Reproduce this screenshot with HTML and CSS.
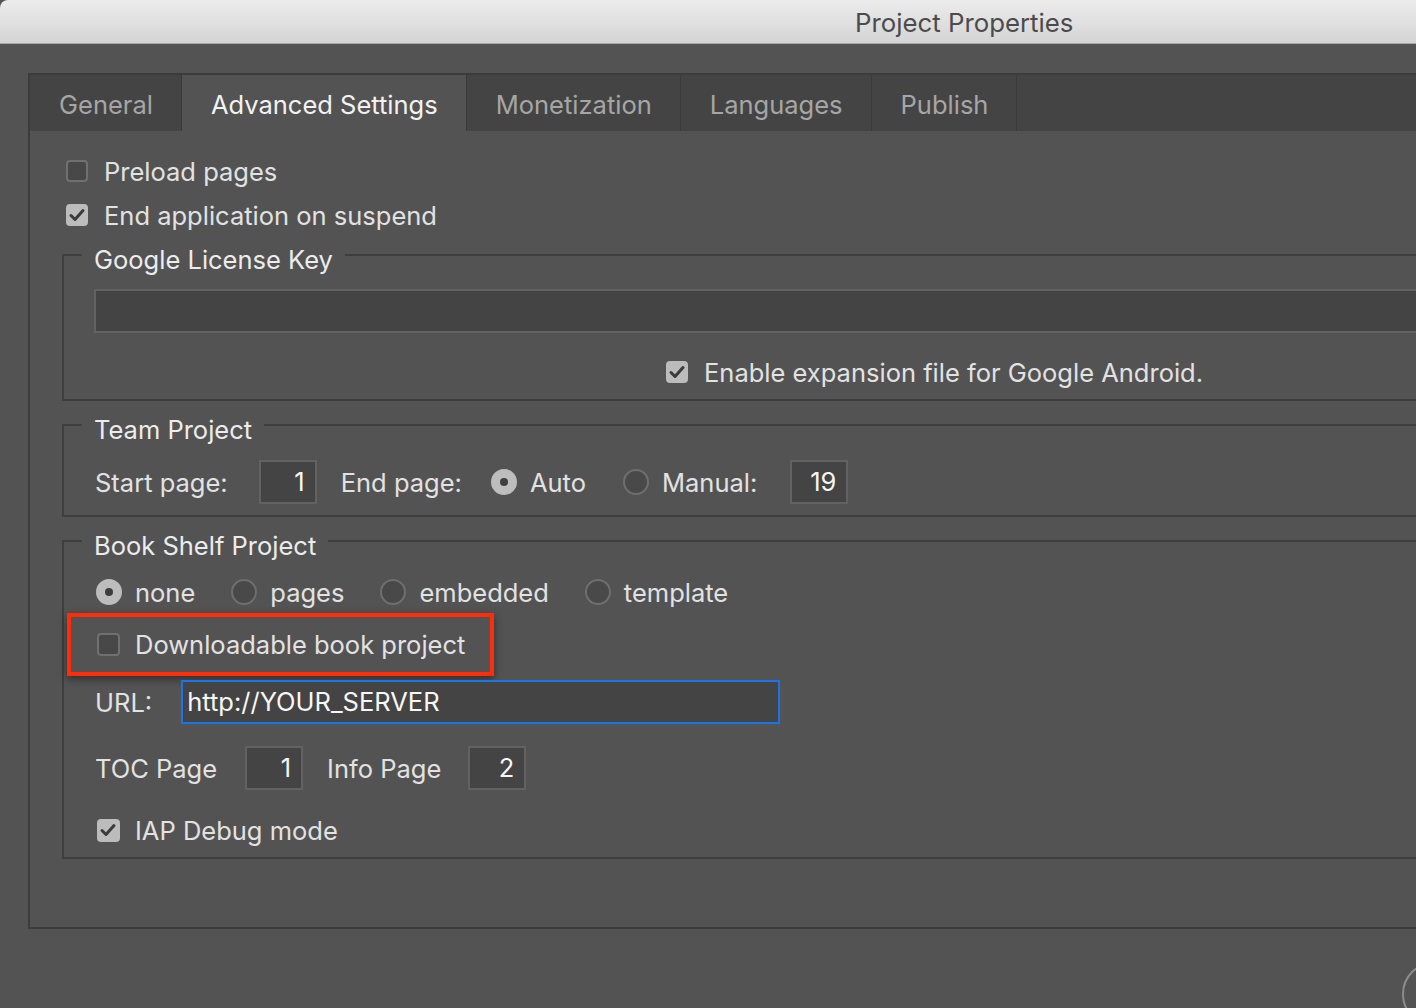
FILE: index.html
```html
<!DOCTYPE html>
<html>
<head>
<meta charset="utf-8">
<title>Project Properties</title>
<link rel="stylesheet" href="styles.css">
</head>
<body>
<div class="window">
  <header class="titlebar">Project Properties</header>
  <main class="main">
    <section class="panel">
      <nav class="tabs">
        <div class="tab">General</div>
        <div class="tab active">Advanced Settings</div>
        <div class="tab">Monetization</div>
        <div class="tab">Languages</div>
        <div class="tab">Publish</div>
      </nav>
      <div class="content">
        <label class="check-row"><span class="checkbox"></span>Preload pages</label>
        <label class="check-row"><span class="checkbox checked"><svg viewBox="0 0 22 22"><path d="M5 11.5l4 4 8-9"/></svg></span>End application on suspend</label>

        <div class="group group-license">
          <div class="legend">Google License Key</div>
          <div class="wide-input"></div>
          <label class="check-row expansion"><span class="checkbox checked"><svg viewBox="0 0 22 22"><path d="M5 11.5l4 4 8-9"/></svg></span>Enable expansion file for Google Android.</label>
        </div>

        <div class="group group-team">
          <div class="legend">Team Project</div>
          <div class="field-row team-row">
            <span class="lbl">Start page:</span>
            <span class="num-input start-input">1</span>
            <span class="lbl endpage">End page:</span>
            <span class="radio-opt auto"><span class="radio on"></span>Auto</span>
            <span class="radio-opt manual"><span class="radio"></span>Manual:</span>
            <span class="num-input manual-input">19</span>
          </div>
        </div>

        <div class="group group-book">
          <div class="legend">Book Shelf Project</div>
          <div class="field-row radios">
            <span class="radio-opt"><span class="radio on"></span>none</span>
            <span class="radio-opt"><span class="radio"></span>pages</span>
            <span class="radio-opt"><span class="radio"></span>embedded</span>
            <span class="radio-opt"><span class="radio"></span>template</span>
          </div>
          <div class="highlight">
            <label class="check-row inner"><span class="checkbox"></span>Downloadable book project</label>
          </div>
          <div class="field-row url-row">
            <span class="lbl">URL:</span>
            <span class="url-input">http://YOUR_SERVER</span>
          </div>
          <div class="field-row toc-row">
            <span class="lbl">TOC Page</span>
            <span class="num-input toc-input">1</span>
            <span class="lbl info">Info Page</span>
            <span class="num-input info-input">2</span>
          </div>
          <label class="check-row inner iap"><span class="checkbox checked"><svg viewBox="0 0 22 22"><path d="M5 11.5l4 4 8-9"/></svg></span>IAP Debug mode</label>
        </div>
      </div>
    </section>
  </main>
  <div class="help-button"></div>
</div>
</body>
</html>
```
FILE: styles.css
```css
* { box-sizing: border-box; }
html, body {
  margin: 0;
  height: 100%;
  overflow: hidden;
  background: #535353;
}
body {
  font-family: "Inter", "Noto Sans", sans-serif;
  font-size: 25.5px;
  color: #e2e2e2;
}
.window {
  position: relative;
  height: 1008px;
  overflow: hidden;
}
.titlebar {
  height: 44px;
  background: linear-gradient(#ececec, #d4d4d4);
  border-bottom: 1px solid #a8a8a8;
  border-top-left-radius: 8px;
  color: #4b4b4b;
  font-size: 25.8px;
  line-height: 46px;
  padding-left: 855px;
}
.main {
  padding: 29px 0 0 28px;
}
.panel {
  margin-right: -60px;
  border: 2px solid #3c3c3c;
  border-right: none;
}
.tabs {
  display: flex;
  height: 56px;
  background: #444444;
}
.tab {
  height: 56px;
  line-height: 60px;
  padding: 0 28px 0 29px;
  border-right: 1px solid #3a3a3a;
  color: #a6a6a6;
  font-size: 25.5px;
}
.tab.active {
  background: #535353;
  color: #f2f2f2;
}
.content {
  padding: 18px 0 68px 36px;
}
.check-row {
  display: flex;
  align-items: center;
  height: 44px;
  gap: 16px;
}
.checkbox {
  width: 22px;
  height: 22px;
  border: 2px solid #707070;
  border-radius: 4px;
  background: #484848;
  flex: none;
  display: flex;
}
.checkbox.checked {
  background: #bcbcbc;
  border-color: #bcbcbc;
}
.checkbox svg {
  margin: -2px;
  width: 22px;
  height: 22px;
}
.checkbox svg path {
  fill: none;
  stroke: #3b3b3b;
  stroke-width: 3;
  stroke-linecap: round;
  stroke-linejoin: round;
}
.group {
  margin-left: -4px;
  border: 2px solid #3e3e3e;
  border-right: none;
  padding-left: 31px;
}
.legend {
  display: block;
  width: max-content;
  margin: -16px 0 0 -13px;
  height: 30px;
  line-height: 39px;
  padding: 0 12px;
  background: #535353;
  color: #ececec;
}
.group-license {
  margin-top: 17px;
  padding-bottom: 5px;
}
.wide-input {
  margin: 19px 0 0 -1px;
  height: 44px;
  background: #444444;
  border: 2px solid #626262;
}
.expansion {
  margin: 17px 0 0 571px;
}
.group-team {
  margin-top: 23px;
  padding-bottom: 11px;
}
.field-row {
  display: flex;
  align-items: center;
  height: 44px;
}
.team-row { margin-top: 20px; }
.num-input {
  width: 58px;
  height: 44px;
  background: #444444;
  border: 2px solid #626262;
  text-align: right;
  padding-right: 10px;
  line-height: 40px;
  color: #f5f5f5;
}
.start-input { margin-left: 31px; }
.endpage { margin-left: 24px; }
.auto { margin-left: 29px; }
.manual { margin-left: 37px; }
.manual-input { margin-left: 33px; }
.radio-opt {
  display: flex;
  align-items: center;
  gap: 13px;
}
.radio {
  width: 26px;
  height: 26px;
  border-radius: 50%;
  border: 2px solid #6f6f6f;
  background: #494949;
  flex: none;
  position: relative;
}
.radio.on {
  background: #bdbdbd;
  border-color: #bdbdbd;
}
.radio.on::after {
  content: "";
  position: absolute;
  left: 7px;
  top: 7px;
  width: 8px;
  height: 8px;
  border-radius: 50%;
  background: #3e3e3e;
}
.group-book {
  margin-top: 23px;
  padding-bottom: 5px;
}
.radios {
  margin: 14px 0 0 1px;
  gap: 36px;
}
.highlight {
  display: block;
  width: max-content;
  margin: -1px 0 0 -28px;
  border: 4px solid #ff2d0a;
  padding: 0 25px 0 26px;
  box-shadow: 0 3px 8px rgba(0,0,0,0.45);
}
.check-row.inner {
  height: 55px;
  gap: 15px;
}
.check-row.inner .checkbox {
  width: 23px;
  height: 23px;
}
.url-row { margin-top: 4px; }
.url-input {
  margin-left: 29px;
  width: 599px;
  height: 44px;
  border: 2px solid #1b73e8;
  background: #444444;
  line-height: 40px;
  padding-left: 4px;
  color: #f7f7f7;
}
.toc-row { margin-top: 22px; }
.toc-input { margin-left: 28px; }
.info { margin-left: 24px; }
.info-input { margin-left: 27px; }
.check-row.iap {
  margin: 18px 0 0 2px;
  height: 44px;
}
.help-button {
  position: absolute;
  left: 1402px;
  top: 962px;
  width: 64px;
  height: 64px;
  border-radius: 50%;
  border: 2px solid #8c8c8c;
}
```
